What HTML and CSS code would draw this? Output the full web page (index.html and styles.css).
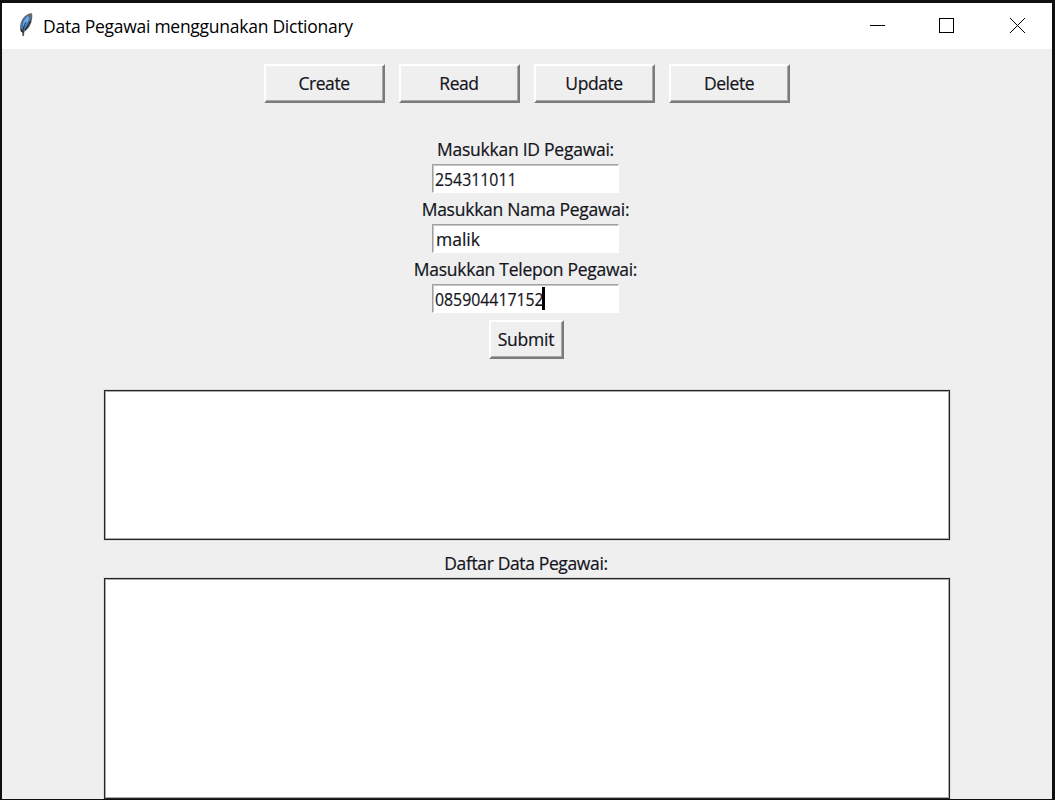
FILE: index.html
```html
<!DOCTYPE html>
<html lang="id">
<head>
<meta charset="utf-8">
<title>Data Pegawai menggunakan Dictionary</title>
<link rel="stylesheet" href="styles.css">
</head>
<body>
<div class="window">
  <header class="titlebar">
    <svg class="feather" width="16" height="26" viewBox="0 0 16 26">
      <path d="M5.200 24 C5.200 21 4.500 20 3 19.500 C.5 14 3.500 6 8.500 3 C10.500 1.500 13 1 14 1.500 C15 5.500 13.500 12 10.500 16 C8.500 18.500 7 19 6.300 20 L6 24Z" fill="#686868"/>
      <path d="M3.300 17.500 C2.300 13 5 6.500 9.500 3.500 L11.500 3.200 C12.500 7 11 12 8.500 15.300 C7 17 5.500 17 4.500 19Z" fill="#3d78bd"/>
      <path d="M4.700 13.500 C5.500 9 7.500 6 10 4 L11 6 C10.500 9 8.500 12 6 14.500Z" fill="#71a9e2"/>
      <path d="M5 24 C4.500 18 6 13 8 10" fill="none" stroke="#26364c"/>
      <path d="M2.800 17 L3.800 19.500 L5.500 20 M12.500 9 L10.500 13 L7 18" fill="none" stroke="#222" stroke-width="1.200"/>
    </svg>
    <h1 class="title">Data Pegawai menggunakan Dictionary</h1>
    <div class="controls">
      <svg width="15" height="15"><path d="M0 7.500H15" stroke="#000"/></svg>
      <svg width="15" height="15"><rect x=".5" y=".5" width="14" height="14" fill="none" stroke="#000"/></svg>
      <svg width="15" height="15"><path d="M0 0L15 15M15 0L0 15" stroke="#000"/></svg>
    </div>
  </header>
  <main class="content">
    <nav class="toolbar">
      <button class="button">Create</button>
      <button class="button">Read</button>
      <button class="button">Update</button>
      <button class="button">Delete</button>
    </nav>
    <div class="form">
      <div class="label">Masukkan ID Pegawai:</div>
      <div class="entry"><span class="digits">254311011</span></div>
      <div class="label">Masukkan Nama Pegawai:</div>
      <div class="entry"><span class="word">malik</span></div>
      <div class="label telepon">Masukkan Telepon Pegawai:</div>
      <div class="entry"><span class="digits">085904417152</span><i class="caret"></i></div>
      <button class="button submit">Submit</button>
    </div>
    <div class="panel result"></div>
    <div class="label list-label">Daftar Data Pegawai:</div>
    <div class="panel list"></div>
  </main>
</div>
</body>
</html>
```
FILE: styles.css
```css
* { box-sizing: border-box; }
body { margin: 0; overflow: hidden; font-family: "Open Sans", "Noto Sans", sans-serif; color: #14141c; }
.window { width: 1055px; height: 800px; border: solid #101010; border-width: 3px 3px 1px 2px; background: #efefef; overflow: hidden; }
.titlebar { height: 46px; background: #fff; display: flex; align-items: center; padding: 0 27px 0 16px; color: #000; }
.feather { margin-top: -3px; }
.title { margin: 0 0 0 9px; font-size: 17.500px; font-weight: 400; line-height: 24px; letter-spacing: -.26px; white-space: nowrap; }
.controls { margin-left: auto; display: flex; align-items: center; gap: 55px; }
.controls svg { display: block; margin-top: -1px; }
.controls svg:nth-child(2) { margin-left: -1px; margin-right: 1px; }
.content { display: flex; flex-direction: column; align-items: center; padding-top: 15px; font-size: 17.500px; -webkit-text-stroke: .2px; }
.toolbar { display: flex; gap: 14px; }
.button { width: 121px; height: 39px; padding: 0 1px 2px 0; background: #efefef; border: solid; border-width: 2px; border-color: #fff #7b7b7b #7b7b7b #fff; box-shadow: inset -1px -1px #a8a8a8; font: inherit; color: inherit; letter-spacing: -.45px; line-height: 24px; white-space: nowrap; display: flex; align-items: center; justify-content: center; }
.form { display: flex; flex-direction: column; align-items: center; margin-top: 31px; margin-right: 3px; }
.label { height: 30px; line-height: 30px; letter-spacing: -.25px; white-space: nowrap; }
.telepon { letter-spacing: -.27px; }
.entry { width: 187px; height: 29px; margin-bottom: 1px; background: #fff; border: solid; border-width: 1px; border-color: #a0a0a0 #fff #fff #a0a0a0; box-shadow: inset 1px 1px #c8c8c8; padding-left: 2px; line-height: 26px; display: flex; align-items: center; white-space: nowrap; }
.word { padding-left: 1px; }
.digits { transform: scaleX(.905); transform-origin: left; }
.caret { width: 3px; height: 23px; margin-left: -13px; background: #000; }
.submit { width: 75px; margin-top: 6px; margin-left: 2px; letter-spacing: -.2px; }
.panel { width: 846px; margin-right: 1px; background: #fff; border: 1px solid #242424; box-shadow: inset 0 0 0 1px #aaa, 0 0 0 1px #dedede; }
.result { height: 150px; margin-top: 31px; }
.list-label { height: 38px; line-height: 46px; letter-spacing: -.37px; margin-right: 2px; }
.list { height: 221px; }
```
